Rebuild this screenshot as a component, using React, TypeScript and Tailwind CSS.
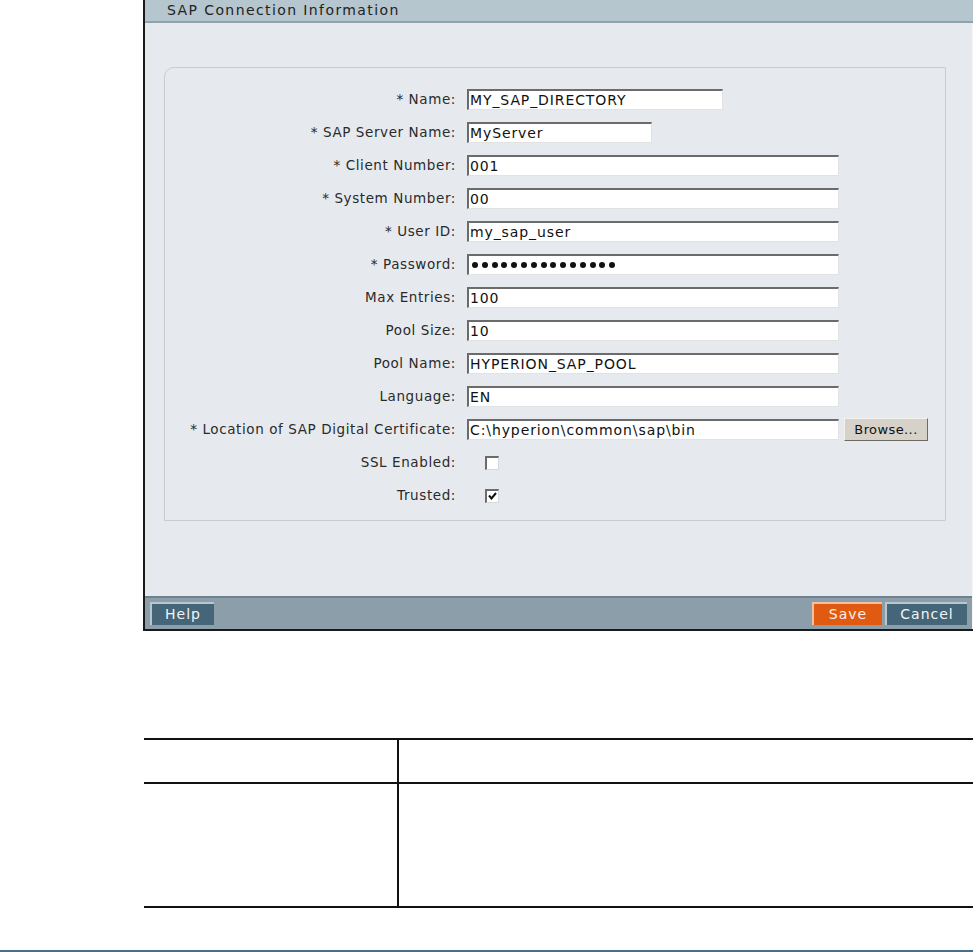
import React from 'react';

type Field = {
  label: string;
  value?: string;
  width?: string;
  kind?: 'text' | 'password' | 'browse' | 'check';
  checked?: boolean;
};

const fields: Field[] = [
  { label: '* Name:', value: 'MY_SAP_DIRECTORY', width: 'w-[256px]' },
  { label: '* SAP Server Name:', value: 'MyServer', width: 'w-[185px]' },
  { label: '* Client Number:', value: '001' },
  { label: '* System Number:', value: '00' },
  { label: '* User ID:', value: 'my_sap_user' },
  { label: '* Password:', kind: 'password' },
  { label: 'Max Entries:', value: '100' },
  { label: 'Pool Size:', value: '10' },
  { label: 'Pool Name:', value: 'HYPERION_SAP_POOL' },
  { label: 'Language:', value: 'EN' },
  { label: '* Location of SAP Digital Certificate:', value: 'C:\\hyperion\\common\\sap\\bin', kind: 'browse' },
  { label: 'SSL Enabled:', kind: 'check', checked: false },
  { label: 'Trusted:', kind: 'check', checked: true },
];

const dots = Array.from({ length: 15 }, (_, i) => i);

const TextBox = ({ value, width = 'w-[372px]', password }: { value?: string; width?: string; password?: boolean }) => (
  <div
    className={`${width} h-[21px] bg-white border-t-2 border-l-2 border-t-[#6b6b6b] border-l-[#6b6b6b] border-b border-r border-b-[#e2e2e2] border-r-[#e2e2e2] flex items-center pl-[1px] text-[14px] tracking-[0.9px] text-[#111] overflow-hidden whitespace-nowrap`}
  >
    {password ? (
      <div className="flex items-center gap-[3.8px] pl-[2px]">
        {dots.map((d) => (
          <div key={d} className="w-[6px] h-[6px] rounded-full bg-[#111]" />
        ))}
      </div>
    ) : (
      value
    )}
  </div>
);

const CheckBox = ({ checked }: { checked?: boolean }) => (
  <div className="ml-[18px] w-[14px] h-[14px] bg-white border-t-2 border-l-2 border-t-[#6b6b6b] border-l-[#6b6b6b] border-b border-r border-b-[#d8d8d8] border-r-[#d8d8d8] flex items-center justify-center">
    {checked && (
      <svg width="9" height="8" viewBox="0 0 9 8">
        <path d="M1 3.5 L3.5 6.5 L8 1" stroke="#111" strokeWidth="2" fill="none" />
      </svg>
    )}
  </div>
);

export default function App() {
  return (
    <div className="w-[973px] h-[952px] bg-white relative font-['DejaVu_Sans',Verdana,sans-serif] text-[#222] overflow-hidden">
      <div className="ml-[143px] w-[830px] h-[631px] border-l-2 border-b-2 border-[#1a1a1a] bg-[#e6eaee] flex flex-col">
        <div className="h-[23px] bg-[#b6c6ce] border-b-2 border-[#8fa3ad] flex items-center pl-[22px] text-[14px] tracking-[1.4px] text-[#222]">
          SAP Connection Information
        </div>
        <div className="flex-1 flex flex-col border-r border-[#f4f6f8]">
          <div className="mt-[44px] ml-[19px] mr-[26px] h-[454px] rounded-tl-[10px] border border-[#c7ccd1] pt-[21px]">
            <div className="grid grid-cols-[291px_1fr] gap-x-[11px] gap-y-[12px] items-center">
              {fields.map((f) => (
                <React.Fragment key={f.label}>
                  <div className="text-right text-[13.5px] tracking-[0.6px] leading-[21px] text-[#2a2a2a] whitespace-nowrap">{f.label}</div>
                  <div className="flex items-center h-[21px]">
                    {f.kind === 'check' ? (
                      <CheckBox checked={f.checked} />
                    ) : (
                      <>
                        <TextBox value={f.value} width={f.width} password={f.kind === 'password'} />
                        {f.kind === 'browse' && (
                          <button className="ml-[5px] w-[84px] h-[23px] bg-[#d6d2ca] border border-t-[#f4f2ee] border-l-[#f4f2ee] border-b-[#6e6a62] border-r-[#6e6a62] text-[13px] tracking-[0.4px] text-[#111]">
                            Browse...
                          </button>
                        )}
                      </>
                    )}
                  </div>
                </React.Fragment>
              ))}
            </div>
          </div>
          <div className="flex-1" />
          <div className="h-[33px] bg-[#8d9eab] border-t-2 border-[#6f818e] flex items-center px-[5px]">
            <button className="w-[64px] h-[23px] bg-[#456579] border-t-2 border-l-2 border-[#b9c6cf] text-[#f2f4f6] text-[14px] tracking-[1px]">
              Help
            </button>
            <div className="flex-1" />
            <button className="w-[70px] h-[23px] bg-[#e05a12] border-t-2 border-l-2 border-[#f0c0a0] text-[#fbeee6] text-[14px] tracking-[1px]">
              Save
            </button>
            <button className="ml-[3px] w-[82px] h-[23px] bg-[#456579] border-t-2 border-l-2 border-[#b9c6cf] text-[#f2f4f6] text-[14px] tracking-[1px]">
              Cancel
            </button>
          </div>
        </div>
      </div>

      <div className="mt-[107px] ml-[144px] w-[829px] border-t-2 border-b-2 border-[#111] grid grid-cols-[255px_1fr]">
        <div className="h-[44px] border-r-2 border-[#111] border-b-2" />
        <div className="h-[44px] border-b-2 border-[#111]" />
        <div className="h-[122px] border-r-2 border-[#111]" />
        <div className="h-[122px]" />
      </div>

      <div className="absolute left-0 right-0 bottom-0 h-[2px] bg-[#4a6d88]" />
    </div>
  );
}
